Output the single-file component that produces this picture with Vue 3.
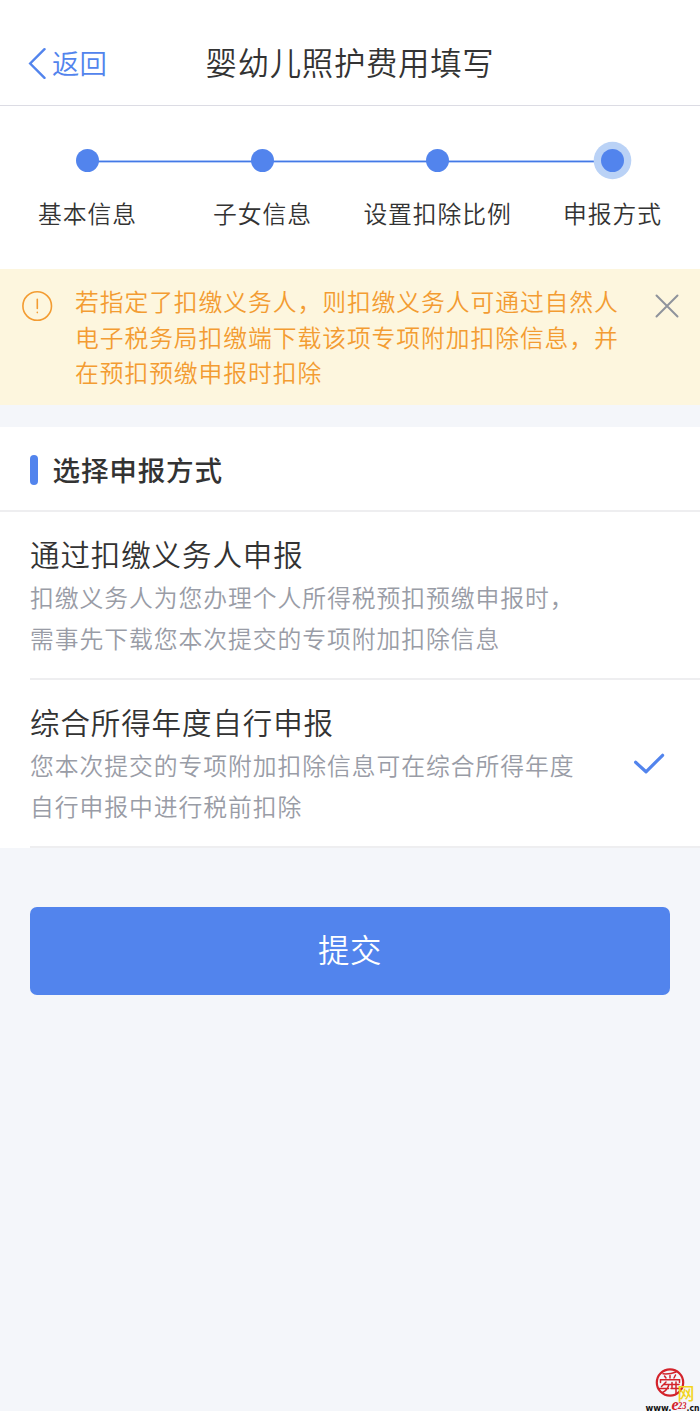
<script setup>
const steps = ['基本信息', '子女信息', '设置扣除比例', '申报方式']
const notice = [
  '若指定了扣缴义务人，则扣缴义务人可通过自然人',
  '电子税务局扣缴端下载该项专项附加扣除信息，并',
  '在预扣预缴申报时扣除',
]
const options = [
  {
    title: '通过扣缴义务人申报',
    lines: ['扣缴义务人为您办理个人所得税预扣预缴申报时，', '需事先下载您本次提交的专项附加扣除信息'],
    checked: false,
  },
  {
    title: '综合所得年度自行申报',
    lines: ['您本次提交的专项附加扣除信息可在综合所得年度', '自行申报中进行税前扣除'],
    checked: true,
  },
]
</script>

<template>
  <main class="page">
    <header class="bar">
      <a class="back">
        <svg class="chevron" width="20" height="32" viewBox="0 0 20 32">
          <path d="M17.5 2.2 3.2 16.5 17.5 30.8" />
        </svg>
        <span>返回</span>
      </a>
      <h1>婴幼儿照护费用填写</h1>
    </header>

    <ol class="steps">
      <li v-for="(s, i) in steps" :key="s" :class="{ current: i === steps.length - 1 }">
        <div class="track"><i class="dot"></i></div>
        <span>{{ s }}</span>
      </li>
    </ol>

    <section class="notice">
      <svg class="warn" width="32" height="32" viewBox="0 0 32 32">
        <circle cx="16.2" cy="16" r="14.3" />
        <path d="M16.3 9.2V18.4M16.3 22.3V22.6" />
      </svg>
      <div class="notice-text">
        <p v-for="l in notice" :key="l">{{ l }}</p>
      </div>
      <svg class="close" width="24" height="24" viewBox="0 0 24 24">
        <path d="M1.5 1.5 22.5 22.5M22.5 1.5 1.5 22.5" />
      </svg>
    </section>

    <section class="card">
      <h2><i class="mark"></i><span>选择申报方式</span></h2>
      <article v-for="o in options" :key="o.title" class="option">
        <div class="copy">
          <h3>{{ o.title }}</h3>
          <p v-for="l in o.lines" :key="l">{{ l }}</p>
        </div>
        <svg v-if="o.checked" class="check" width="32" height="24" viewBox="0 0 32 24">
          <path d="M2.6 11.3 13 20.8 29.6 4.3" />
        </svg>
      </article>
    </section>

    <button class="submit">提交</button>

    <svg class="logo" width="56" height="44" viewBox="0 0 56 44">
      <g class="seal">
        <circle class="ring" cx="26" cy="15.5" r="13.2" />
        <path d="M19 6.8Q26 7.4 32 5M20.5 9 22 11M26 8.5V11M31.5 8 30 11M16.5 15.5V12.8H35.5V15.5M22 15 17.5 19.5M20 17.5H25Q23.5 23 18.5 25.5M15.5 21.5H24.5M28 15.5V20.5M26.5 17.5H35M27 21.5H37M32 15V27" />
      </g>
      <text class="net" x="33.5" y="33" textLength="17">网</text>
      <text class="host" x="1.5" y="43.5" textLength="26" lengthAdjust="spacingAndGlyphs">www.</text>
      <text class="e" x="27.5" y="43">e</text>
      <text class="num" x="34" y="42" textLength="8.5" lengthAdjust="spacingAndGlyphs">23</text>
      <text class="host" x="42.6" y="43.5" textLength="13" lengthAdjust="spacingAndGlyphs">.cn</text>
    </svg>
  </main>
</template>

<style>
body {
  background: #f4f6fa;
}
</style>

<style scoped>
.page {
  position: relative;
  height: 1411px;
  overflow: hidden;
  background: #f4f6fa;
  color: #333;
  font-family: 'Noto Sans CJK SC', sans-serif;
  font-weight: 350;
}
h1, h2, h3, p, ol {
  margin: 0;
  padding: 0;
  font-weight: inherit;
}
svg {
  display: block;
  flex: none;
  fill: none;
  stroke-linecap: round;
}
.bar {
  position: relative;
  box-sizing: border-box;
  height: 106px;
  padding-top: 39px;
  background: #fff;
  border-bottom: 1.5px solid #dcdce4;
}
.back {
  position: absolute;
  left: 27px;
  top: 43px;
  display: flex;
  align-items: center;
  height: 40px;
  color: #5284ed;
  font-size: 27.4px;
  letter-spacing: 0.2px;
  gap: 5px;
}
.back span {
  margin-top: -3px;
}
.chevron {
  stroke: #5284ed;
  stroke-width: 2.4;
}
h1 {
  font-size: 31.4px;
  line-height: 46px;
  letter-spacing: 0.7px;
  text-align: center;
}
.steps {
  display: grid;
  grid-template-columns: repeat(4, 175px);
  height: 163px;
  background: #fff;
  list-style: none;
}
.steps li {
  display: flex;
  flex-direction: column;
  align-items: center;
  padding-top: 35px;
  font-size: 23.8px;
  line-height: 36px;
  letter-spacing: 0.9px;
  white-space: nowrap;
}
.steps span {
  margin-top: 16px;
}
.track {
  display: flex;
  justify-content: center;
  align-items: center;
  position: relative;
  width: 100%;
  height: 38px;
}
.steps li:not(:last-child) .track::after {
  content: '';
  position: absolute;
  left: 50%;
  top: 19px;
  width: 100%;
  height: 3px;
  background: linear-gradient(#a9c3f6 1px, #4479e6 1px 2px, #b9cef8 2px);
}
.dot {
  position: relative;
  z-index: 1;
  width: 23px;
  height: 23px;
  border-radius: 50%;
  background: #5284ed;
}
.current .dot {
  box-shadow: 0 0 0 7.3px #bad2f6;
}
.notice {
  display: flex;
  align-items: flex-start;
  box-sizing: border-box;
  height: 136px;
  padding: 14px 21.5px 0 21px;
  background: #fdf6de;
  color: #f39c32;
}
.warn {
  margin-top: 7px;
  stroke: #f39c32;
  stroke-width: 1.6;
}
.notice-text {
  flex: 1;
  margin-left: 22px;
  font-size: 23.8px;
  line-height: 35.5px;
  letter-spacing: 0.92px;
  white-space: nowrap;
}
.close {
  margin-top: 10.5px;
  stroke: #8f939b;
  stroke-width: 2;
}
.card {
  margin-top: 22px;
  background: #fff;
}
h2 {
  display: flex;
  align-items: center;
  box-sizing: border-box;
  height: 85px;
  padding: 2px 0 0 30px;
  border-bottom: 2px solid #eeeef0;
  font-size: 27.6px;
  font-weight: 500;
  letter-spacing: 0.8px;
}
h2 span {
  margin-top: -1px;
}
.mark {
  width: 7.5px;
  height: 30px;
  margin-right: 15px;
  border-radius: 4px;
  background: #5284ed;
}
.option {
  display: flex;
  justify-content: space-between;
  align-items: center;
  box-sizing: border-box;
  height: 168px;
  margin-left: 30px;
  padding-right: 35px;
  border-bottom: 2px solid #eeeef0;
}
.copy {
  padding-bottom: 2px;
  white-space: nowrap;
}
h3 {
  font-size: 29.5px;
  line-height: 46px;
  letter-spacing: 0.9px;
}
.copy p {
  color: #999ca6;
  font-size: 23.8px;
  line-height: 41px;
  letter-spacing: 0.95px;
}
.check {
  stroke: #5284ed;
  stroke-width: 3.2;
  stroke-linejoin: round;
}
.submit {
  display: block;
  width: 640px;
  height: 88px;
  margin: 59px auto 0;
  padding: 0 0 5px;
  border: 0;
  border-radius: 7px;
  background: #5284ed;
  color: #fff;
  font: inherit;
  font-size: 31.4px;
  letter-spacing: 0.6px;
}
.logo {
  position: absolute;
  right: 0;
  bottom: 0;
}
.seal {
  stroke: #d3232b;
  stroke-width: 1.5;
}
.ring {
  stroke-width: 2.2;
}
.net {
  fill: #f2d51d;
  font-size: 17px;
  font-weight: 500;
}
.host {
  fill: #111;
  font: bold 9px 'DejaVu Sans', sans-serif;
}
.e,
.num {
  fill: #d3232b;
  font: italic bold 16px 'Liberation Serif', serif;
}
.num {
  font-size: 10px;
}
</style>
